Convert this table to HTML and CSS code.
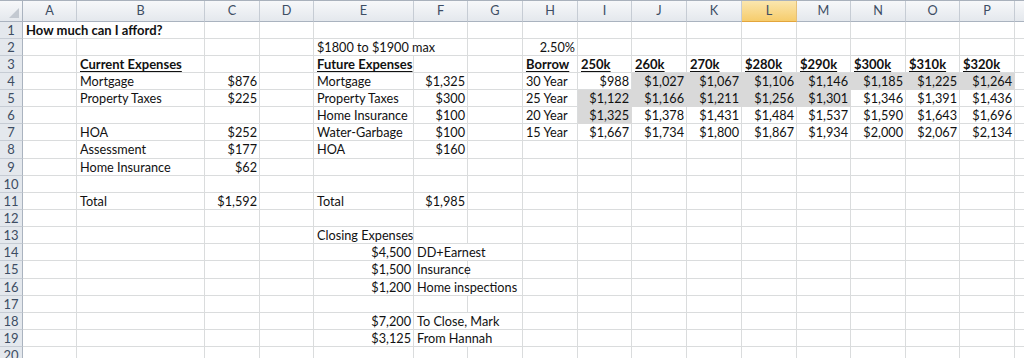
FILE: index.html
```html
<!DOCTYPE html>
<html lang="en">
<head>
<meta charset="utf-8">
<title>How much can I afford?</title>
<link rel="stylesheet" href="styles.css">
</head>
<body>
<div class="sheet">
  <div class="row head">
    <div class="c corner"></div>
    <div class="c ch">A</div><div class="c ch">B</div><div class="c ch">C</div><div class="c ch">D</div>
    <div class="c ch">E</div><div class="c ch">F</div><div class="c ch">G</div><div class="c ch">H</div>
    <div class="c ch">I</div><div class="c ch">J</div><div class="c ch">K</div><div class="c ch sel">L</div>
    <div class="c ch">M</div><div class="c ch">N</div><div class="c ch">O</div><div class="c ch">P</div>
    <div class="c ch"></div>
  </div>

  <div class="row">
    <div class="c rn">1</div>
    <div class="c span2 b">How much can I afford?</div>
    <div class="c"></div><div class="c"></div><div class="c"></div><div class="c"></div><div class="c"></div>
    <div class="c"></div><div class="c"></div><div class="c"></div><div class="c"></div><div class="c"></div>
    <div class="c"></div><div class="c"></div><div class="c"></div><div class="c"></div><div class="c"></div>
  </div>

  <div class="row">
    <div class="c rn">2</div>
    <div class="c"></div><div class="c"></div><div class="c"></div><div class="c"></div>
    <div class="c span2">$1800 to $1900 max</div>
    <div class="c"></div><div class="c r">2.50%</div>
    <div class="c"></div><div class="c"></div><div class="c"></div><div class="c"></div>
    <div class="c"></div><div class="c"></div><div class="c"></div><div class="c"></div><div class="c"></div>
  </div>

  <div class="row">
    <div class="c rn">3</div>
    <div class="c"></div><div class="c b"><u>Current Expenses</u></div><div class="c"></div><div class="c"></div>
    <div class="c b"><u>Future Expenses</u></div><div class="c"></div><div class="c"></div>
    <div class="c b"><u>Borrow</u></div>
    <div class="c b"><u>250k</u></div><div class="c b"><u>260k</u></div><div class="c b"><u>270k</u></div>
    <div class="c b"><u>$280k</u></div><div class="c b"><u>$290k</u></div><div class="c b"><u>$300k</u></div>
    <div class="c b"><u>$310k</u></div><div class="c b"><u>$320k</u></div><div class="c"></div>
  </div>

  <div class="row">
    <div class="c rn">4</div>
    <div class="c"></div><div class="c">Mortgage</div><div class="c r">$876</div><div class="c"></div>
    <div class="c">Mortgage</div><div class="c r">$1,325</div><div class="c"></div>
    <div class="c">30 Year</div>
    <div class="c r">$988</div><div class="c r sh">$1,027</div><div class="c r sh">$1,067</div>
    <div class="c r sh">$1,106</div><div class="c r sh">$1,146</div><div class="c r sh">$1,185</div>
    <div class="c r sh">$1,225</div><div class="c r sh">$1,264</div><div class="c"></div>
  </div>

  <div class="row">
    <div class="c rn">5</div>
    <div class="c"></div><div class="c">Property Taxes</div><div class="c r">$225</div><div class="c"></div>
    <div class="c">Property Taxes</div><div class="c r">$300</div><div class="c"></div>
    <div class="c">25 Year</div>
    <div class="c r sh">$1,122</div><div class="c r sh">$1,166</div><div class="c r sh">$1,211</div>
    <div class="c r sh">$1,256</div><div class="c r sh">$1,301</div><div class="c r">$1,346</div>
    <div class="c r">$1,391</div><div class="c r">$1,436</div><div class="c"></div>
  </div>

  <div class="row">
    <div class="c rn">6</div>
    <div class="c"></div><div class="c"></div><div class="c"></div><div class="c"></div>
    <div class="c">Home Insurance</div><div class="c r">$100</div><div class="c"></div>
    <div class="c">20 Year</div>
    <div class="c r sh">$1,325</div><div class="c r">$1,378</div><div class="c r">$1,431</div>
    <div class="c r">$1,484</div><div class="c r">$1,537</div><div class="c r">$1,590</div>
    <div class="c r">$1,643</div><div class="c r">$1,696</div><div class="c"></div>
  </div>

  <div class="row">
    <div class="c rn">7</div>
    <div class="c"></div><div class="c">HOA</div><div class="c r">$252</div><div class="c"></div>
    <div class="c">Water-Garbage</div><div class="c r">$100</div><div class="c"></div>
    <div class="c">15 Year</div>
    <div class="c r">$1,667</div><div class="c r">$1,734</div><div class="c r">$1,800</div>
    <div class="c r">$1,867</div><div class="c r">$1,934</div><div class="c r">$2,000</div>
    <div class="c r">$2,067</div><div class="c r">$2,134</div><div class="c"></div>
  </div>

  <div class="row tall">
    <div class="c rn">8</div>
    <div class="c"></div><div class="c">Assessment</div><div class="c r">$177</div><div class="c"></div>
    <div class="c">HOA</div><div class="c r">$160</div><div class="c"></div><div class="c"></div>
    <div class="c"></div><div class="c"></div><div class="c"></div><div class="c"></div>
    <div class="c"></div><div class="c"></div><div class="c"></div><div class="c"></div><div class="c"></div>
  </div>

  <div class="row">
    <div class="c rn">9</div>
    <div class="c"></div><div class="c">Home Insurance</div><div class="c r">$62</div><div class="c"></div>
    <div class="c"></div><div class="c"></div><div class="c"></div><div class="c"></div>
    <div class="c"></div><div class="c"></div><div class="c"></div><div class="c"></div>
    <div class="c"></div><div class="c"></div><div class="c"></div><div class="c"></div><div class="c"></div>
  </div>

  <div class="row">
    <div class="c rn">10</div>
    <div class="c"></div><div class="c"></div><div class="c"></div><div class="c"></div>
    <div class="c"></div><div class="c"></div><div class="c"></div><div class="c"></div>
    <div class="c"></div><div class="c"></div><div class="c"></div><div class="c"></div>
    <div class="c"></div><div class="c"></div><div class="c"></div><div class="c"></div><div class="c"></div>
  </div>

  <div class="row">
    <div class="c rn">11</div>
    <div class="c"></div><div class="c">Total</div><div class="c r">$1,592</div><div class="c"></div>
    <div class="c">Total</div><div class="c r">$1,985</div><div class="c"></div><div class="c"></div>
    <div class="c"></div><div class="c"></div><div class="c"></div><div class="c"></div>
    <div class="c"></div><div class="c"></div><div class="c"></div><div class="c"></div><div class="c"></div>
  </div>

  <div class="row">
    <div class="c rn">12</div>
    <div class="c"></div><div class="c"></div><div class="c"></div><div class="c"></div>
    <div class="c"></div><div class="c"></div><div class="c"></div><div class="c"></div>
    <div class="c"></div><div class="c"></div><div class="c"></div><div class="c"></div>
    <div class="c"></div><div class="c"></div><div class="c"></div><div class="c"></div><div class="c"></div>
  </div>

  <div class="row">
    <div class="c rn">13</div>
    <div class="c"></div><div class="c"></div><div class="c"></div><div class="c"></div>
    <div class="c">Closing Expenses</div><div class="c"></div><div class="c"></div><div class="c"></div>
    <div class="c"></div><div class="c"></div><div class="c"></div><div class="c"></div>
    <div class="c"></div><div class="c"></div><div class="c"></div><div class="c"></div><div class="c"></div>
  </div>

  <div class="row">
    <div class="c rn">14</div>
    <div class="c"></div><div class="c"></div><div class="c"></div><div class="c"></div>
    <div class="c r">$4,500</div><div class="c span2">DD+Earnest</div><div class="c"></div>
    <div class="c"></div><div class="c"></div><div class="c"></div><div class="c"></div>
    <div class="c"></div><div class="c"></div><div class="c"></div><div class="c"></div><div class="c"></div>
  </div>

  <div class="row tall">
    <div class="c rn">15</div>
    <div class="c"></div><div class="c"></div><div class="c"></div><div class="c"></div>
    <div class="c r">$1,500</div><div class="c">Insurance</div><div class="c"></div><div class="c"></div>
    <div class="c"></div><div class="c"></div><div class="c"></div><div class="c"></div>
    <div class="c"></div><div class="c"></div><div class="c"></div><div class="c"></div><div class="c"></div>
  </div>

  <div class="row">
    <div class="c rn">16</div>
    <div class="c"></div><div class="c"></div><div class="c"></div><div class="c"></div>
    <div class="c r">$1,200</div><div class="c span2">Home inspections</div><div class="c"></div>
    <div class="c"></div><div class="c"></div><div class="c"></div><div class="c"></div>
    <div class="c"></div><div class="c"></div><div class="c"></div><div class="c"></div><div class="c"></div>
  </div>

  <div class="row">
    <div class="c rn">17</div>
    <div class="c"></div><div class="c"></div><div class="c"></div><div class="c"></div>
    <div class="c"></div><div class="c"></div><div class="c"></div><div class="c"></div>
    <div class="c"></div><div class="c"></div><div class="c"></div><div class="c"></div>
    <div class="c"></div><div class="c"></div><div class="c"></div><div class="c"></div><div class="c"></div>
  </div>

  <div class="row">
    <div class="c rn">18</div>
    <div class="c"></div><div class="c"></div><div class="c"></div><div class="c"></div>
    <div class="c r">$7,200</div><div class="c span2">To Close, Mark</div><div class="c"></div>
    <div class="c"></div><div class="c"></div><div class="c"></div><div class="c"></div>
    <div class="c"></div><div class="c"></div><div class="c"></div><div class="c"></div><div class="c"></div>
  </div>

  <div class="row">
    <div class="c rn">19</div>
    <div class="c"></div><div class="c"></div><div class="c"></div><div class="c"></div>
    <div class="c r">$3,125</div><div class="c span2">From Hannah</div><div class="c"></div>
    <div class="c"></div><div class="c"></div><div class="c"></div><div class="c"></div>
    <div class="c"></div><div class="c"></div><div class="c"></div><div class="c"></div><div class="c"></div>
  </div>

  <div class="row">
    <div class="c rn">20</div>
    <div class="c"></div><div class="c"></div><div class="c"></div><div class="c"></div>
    <div class="c"></div><div class="c"></div><div class="c"></div><div class="c"></div>
    <div class="c"></div><div class="c"></div><div class="c"></div><div class="c"></div>
    <div class="c"></div><div class="c"></div><div class="c"></div><div class="c"></div><div class="c"></div>
  </div>
</div>
</body>
</html>
```

FILE: styles.css
```css
html, body {
  margin: 0;
  padding: 0;
  background: #ffffff;
  overflow: hidden;
}

.sheet {
  width: 1060px;
  font-family: Lato, "Open Sans", "Liberation Sans", sans-serif;
  font-size: 12.7px;
  color: #111111;
}

.row {
  display: grid;
  grid-template-columns: 23px 54px 128px 55px 54px 100px 54px 55px 55px 54px 55px 55px 55px 54px 55px 54px 55px 41px;
  height: 17px;
}

.row.tall {
  height: 18px;
}

.c {
  box-sizing: border-box;
  border-right: 1px solid #dadcdd;
  border-bottom: 1px solid #dadcdd;
  padding: 0 2px 0 3px;
  white-space: nowrap;
  overflow: visible;
  line-height: 16px;
}

.tall .c {
  line-height: 17px;
}

.span2 {
  grid-column: span 2;
}

.r {
  text-align: right;
}

.b {
  font-weight: 700;
  font-size: 13px;
}

.b u {
  text-decoration-thickness: 1px;
  text-underline-offset: 2px;
}

.sh {
  background: #d9d9d9;
  border-color: #d9d9d9;
}

/* headers */
.head {
  height: 21px;
  border-top: 1px solid #a9b1bc;
}

.ch {
  background: linear-gradient(#f7f8fa, #e4e8ed);
  border-right: 1px solid #c6ccd4;
  border-bottom: 1px solid #aab3bf;
  color: #3d4d63;
  text-align: center;
  line-height: 19px;
  padding: 0;
}

.ch.sel {
  background: linear-gradient(#fbe6ae, #f6cc6c);
  border-bottom-color: #e3a53c;
  border-right-color: #e5c07a;
}

.corner {
  position: relative;
  background: linear-gradient(#f7f8fa, #e4e8ed);
  border-right: 1px solid #aab3bf;
  border-bottom: 1px solid #aab3bf;
  padding: 0;
}

.corner::after {
  content: "";
  position: absolute;
  right: 3px;
  bottom: 3px;
  width: 10px;
  height: 10px;
  background: #c3c9d1;
  clip-path: polygon(100% 0, 100% 100%, 0 100%);
}

.rn {
  background: #e4e8ed;
  border-right: 1px solid #aab3bf;
  border-bottom: 1px solid #c6ccd4;
  color: #3d4d63;
  text-align: center;
  font-size: 13px;
  line-height: 16px;
  padding: 0;
}

.tall .rn {
  line-height: 17px;
}
```
